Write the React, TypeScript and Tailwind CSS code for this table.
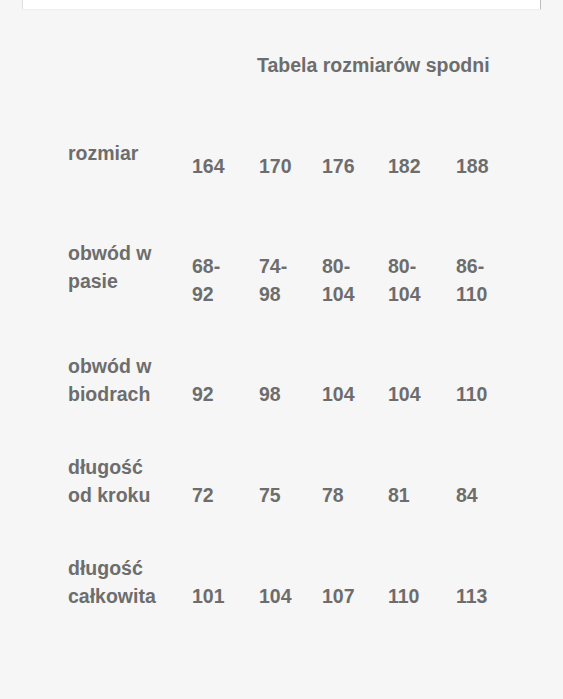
import React from "react";

const cols = ["w-[67px]", "w-[63px]", "w-[66px]", "w-[68px]", "w-[60px]"];

type Row = { label: string[]; values: string[][]; mt: string; pt: string };

const rows: Row[] = [
  { label: ["rozmiar"], values: [["164"], ["170"], ["176"], ["182"], ["188"]], mt: "mt-[60px]", pt: "pt-[13px]" },
  {
    label: ["obwód w", "pasie"],
    values: [["68-", "92"], ["74-", "98"], ["80-", "104"], ["80-", "104"], ["86-", "110"]],
    mt: "mt-[60px]",
    pt: "pt-[13px]",
  },
  { label: ["obwód w", "biodrach"], values: [["92"], ["98"], ["104"], ["104"], ["110"]], mt: "mt-[45px]", pt: "pt-[27.5px]" },
  { label: ["długość", "od kroku"], values: [["72"], ["75"], ["78"], ["81"], ["84"]], mt: "mt-[46px]", pt: "pt-[27.5px]" },
  { label: ["długość", "całkowita"], values: [["101"], ["104"], ["107"], ["110"], ["113"]], mt: "mt-[46px]", pt: "pt-[27.5px]" },
];

export default function App() {
  return (
    <div
      className="w-full h-[699px] bg-[#f6f6f6] text-[#6d6d6d] font-bold text-[19.5px] leading-[27.5px] overflow-hidden"
      style={{ fontFamily: '"Liberation Sans", Arial, sans-serif' }}
    >
      <div className="ml-[22px] w-[519px] h-[9px] bg-white border-l border-r border-l-[#e0e0e0] border-r-[#bdbdbd] shadow-[0_1px_1px_rgba(0,0,0,0.03)]" />
      <div className="mt-[43px] pl-[257px] whitespace-nowrap">Tabela rozmiarów spodni</div>
      <div className="pl-[68px]">
        {rows.map((r, i) => (
          <div key={i} className={`flex ${r.mt}`}>
            <div className="w-[124px] whitespace-nowrap">
              {r.label.map((l, j) => (
                <div key={j}>{l}</div>
              ))}
            </div>
            {r.values.map((v, k) => (
              <div key={k} className={`${cols[k]} ${r.pt} whitespace-nowrap`}>
                {v.map((t, j) => (
                  <div key={j}>{t}</div>
                ))}
              </div>
            ))}
          </div>
        ))}
      </div>
    </div>
  );
}
